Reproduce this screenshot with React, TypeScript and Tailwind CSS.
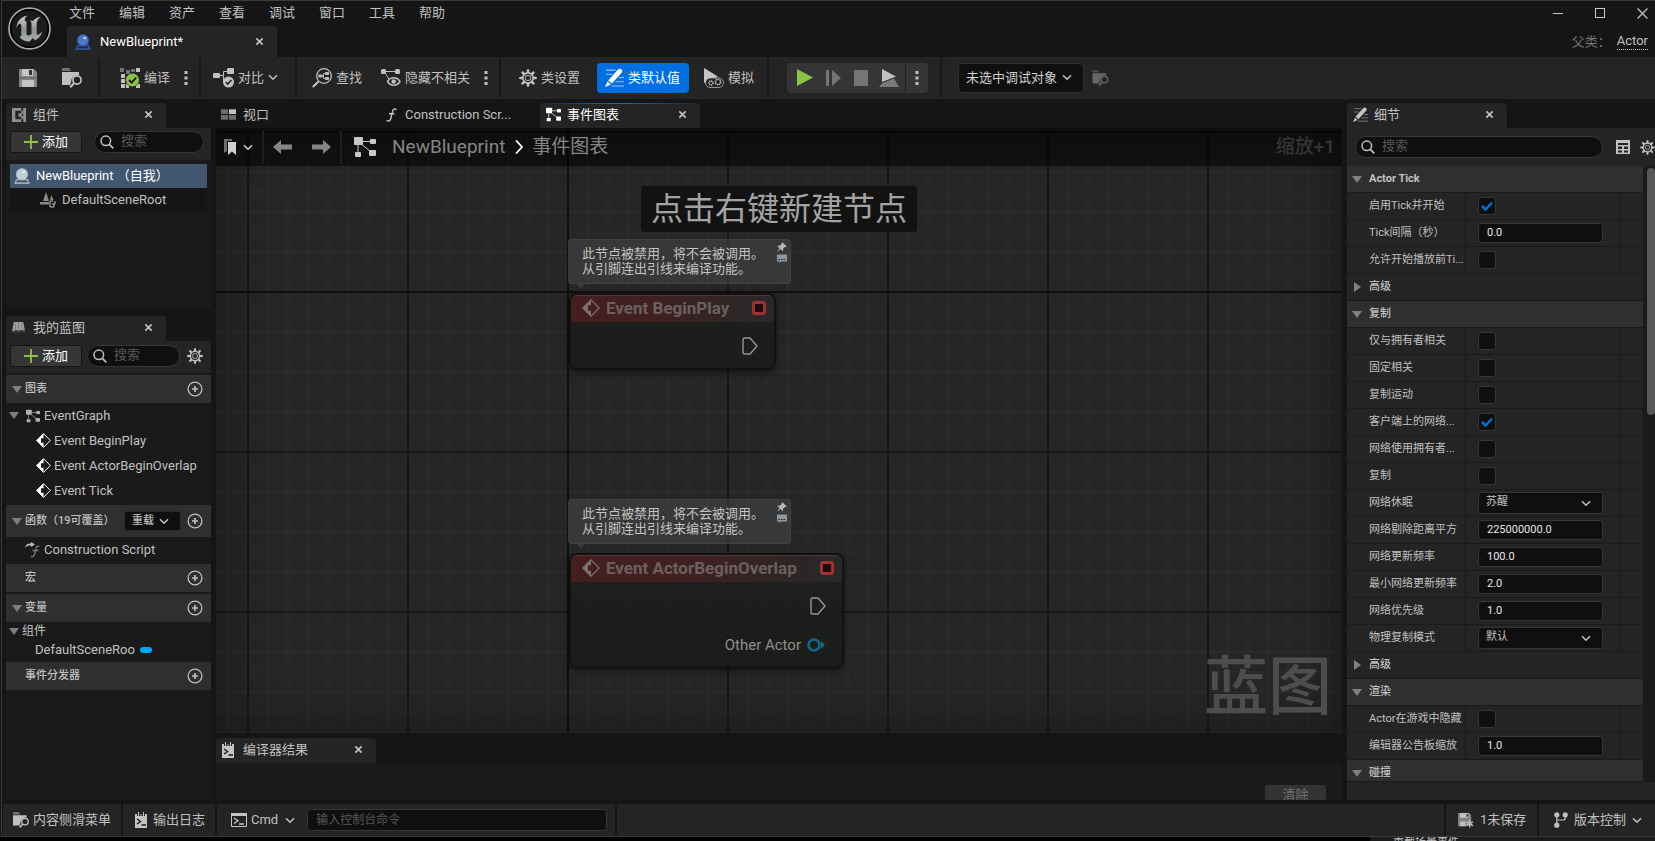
import { useId, type ReactNode } from 'react';

type P = { className?: string };

const Svg = ({ className = '', box = '0 0 20 20', children }: P & { box?: string; children: ReactNode }) => (
  <svg viewBox={box} className={`shrink-0 ${className}`} fill="currentColor" aria-hidden="true">
    {children}
  </svg>
);

const Logo = () => (
  <Svg box="0 0 24 24" className="size-[43px]">
    <defs>
      <linearGradient id="metal" x1="0" y1="0" x2="0" y2="1">
        <stop offset="0" stopColor="#c9cccd" />
        <stop offset="0.55" stopColor="#8d9394" />
        <stop offset="1" stopColor="#aab0b1" />
      </linearGradient>
    </defs>
    <circle cx="12" cy="12" r="11.4" fill="#1b1b1b" stroke="#a9a9a9" strokeWidth="1" />
    <circle cx="12" cy="12" r="10.5" fill="none" stroke="#000" strokeWidth="0.9" />
    <path
      fill="url(#metal)"
      d="M19.13 13.729c-.206.997-1.126 3.557-4.06 4.942l-1.179-1.325-1.988 2a7.338 7.338 0 01-5.804-2.978 2.859 2.859 0 00.65.123c.326.006.678-.114.678-.66v-5.394a.89.89 0 00-1.116-.89c-.92.212-1.656 2.509-1.656 2.509a7.304 7.304 0 012.528-5.597 7.408 7.408 0 013.73-1.721c-1.006.573-1.57 1.507-1.57 2.29 0 1.262.76 1.109.984.923v7.28a1.157 1.157 0 00.148.256 1.075 1.075 0 00.88.445c.76 0 1.747-.868 1.747-.868V9.172c0-.6-.452-1.324-.905-1.572 0 0 .838-.149 1.484.346a5.537 5.537 0 01.387-.425c1.508-1.48 2.929-1.902 4.112-2.112 0 0-2.151 1.69-2.151 3.96 0 1.687.043 5.801.043 5.801.799.771 1.986-.342 3.059-1.441Z"
    />
  </Svg>
);

const Orb = ({ className }: P) => (
  <Svg box="0 0 16 16" className={className}>
    <path d="M2 11h2.5a6 6 0 007 0H14l2 5H0z" opacity=".75" />
    <circle cx="8" cy="6.3" r="6" />
    <circle cx="8" cy="6.3" r="5" fill="#fff" opacity=".12" />
    <circle cx="9.8" cy="4" r="1.3" fill="#fff" opacity=".7" />
    <path d="M3 12.5h10l.8 1.8H2.2z" fill="#111" opacity=".6" />
  </Svg>
);

const Close = ({ className = 'size-[9px]' }: P) => (
  <Svg box="0 0 10 10" className={className}>
    <path d="M1.5 1.5l7 7m0-7l-7 7" fill="none" stroke="currentColor" strokeWidth="1.9" />
  </Svg>
);

const Chevron = ({ className = 'h-[7px] w-[10px]' }: P) => (
  <Svg box="0 0 10 7" className={className}>
    <path d="M1 1.2l4 4 4-4" fill="none" stroke="currentColor" strokeWidth="1.6" />
  </Svg>
);

const Dots = () => (
  <Svg box="0 0 4 16" className="h-[16px] w-[4px] text-[#c0c0c0]">
    <rect x=".5" y="1" width="3" height="3" />
    <rect x=".5" y="6.5" width="3" height="3" />
    <rect x=".5" y="12" width="3" height="3" />
  </Svg>
);

const SaveIcon = ({ className = 'size-[18px]' }: P) => (
  <Svg box="0 0 18 18" className={className}>
    <path d="M0 0h15l3 3v15H0z" fill="#868686" />
    <path d="M3 0h11v7H3z" fill="#c4c4c4" />
    <path d="M10 1h3v5h-3z" fill="#333" />
    <path d="M3 11h12v7H3z" fill="#c4c4c4" />
    <path d="M0 9h18" stroke="#333" strokeWidth="1" opacity=".5" />
  </Svg>
);

const BrowseIcon = ({ className = 'h-[20px] w-[20px]' }: P) => (
  <Svg box="0 0 20 20" className={className}>
    <path d="M0 0h7l2 3H0z" opacity=".5" />
    <path d="M0 4h17v3.2A6.4 6.4 0 009.200 14L8 17H0z" />
    <circle cx="15" cy="12" r="4.1" fill="none" stroke="currentColor" strokeWidth="1.7" />
    <path d="M12.2 15l-4 4.2" stroke="currentColor" strokeWidth="2.2" />
  </Svg>
);

const CompileIcon = () => (
  <Svg box="0 0 20 20" className="size-[20px] text-[#c0c0c0]">
    <path d="M0 0h4v4H0zM6 2h4v4H6zM11 1h4v3h-4z" opacity=".5" />
    <path d="M16 0h4v4h-4zM1 6h4v4H1zM1 11h4v4H1zM1 16h4v4H1zM6 16h3v4H6zM16 16h4v4h-4zM6 9h3v3H6z" />
    <circle cx="12.5" cy="12" r="6.8" fill="#8bc24a" stroke="#242424" strokeWidth=".6" />
    <path d="M9 12l2.600 2.600 4.600-5" fill="none" stroke="#1d1d1d" strokeWidth="2" />
  </Svg>
);

const DiffIcon = () => (
  <Svg box="0 0 21 20" className="h-[20px] w-[21px] text-[#c0c0c0]">
    <rect x="0" y="5" width="7" height="5" rx="1" />
    <rect x="14" y="0" width="7" height="6" rx="1" />
    <path d="M7 7.5h3.500v-4H14m-3.500 4v7" fill="none" stroke="currentColor" strokeWidth="1" />
    <circle cx="15.500" cy="14" r="5.500" />
    <path d="M12.800 14l2 2 3.600-4" fill="none" stroke="#242424" strokeWidth="1.600" />
  </Svg>
);

const FindIcon = () => (
  <Svg box="0 0 20 20" className="size-[20px] text-[#c0c0c0]">
    <circle cx="12" cy="8" r="7.300" fill="none" stroke="currentColor" strokeWidth="1.300" />
    <path d="M6.500 13.500L.8 19" stroke="currentColor" strokeWidth="2.200" />
    <rect x="6.500" y="6.500" width="4" height="3" />
    <rect x="13" y="4" width="4" height="3" rx=".8" />
    <rect x="13" y="9" width="4" height="3" rx=".8" />
    <path d="M10 8h1.500m1.500-2.500h-1.500v5H13" fill="none" stroke="currentColor" strokeWidth=".9" />
  </Svg>
);

const HideIcon = () => (
  <Svg box="0 0 20 20" className="size-[20px] text-[#c0c0c0]">
    <rect x="0" y="1" width="5" height="5" rx="1.500" />
    <rect x="14" y="1" width="5" height="5" rx="1.500" />
    <path d="M5 3.500h9M4 5l4 6" stroke="currentColor" strokeWidth="1" fill="none" />
    <path d="M6.500 13.500c3-5 9.500-5 12.500 0-3 5-9.500 5-12.500 0z" fill="none" stroke="currentColor" strokeWidth="1.500" />
    <circle cx="12.700" cy="13.500" r="2.300" />
  </Svg>
);

const teeth = [0, 45, 90, 135, 180, 225, 270, 315];
const Gear = ({ className = 'size-[16px]' }: P) => (
  <Svg box="0 0 20 20" className={className}>
    {teeth.map((a) => (
      <path key={a} d="M8.300 4.500L8.900.2h2.200l.6 4.300z" transform={`rotate(${a} 10 10)`} />
    ))}
    <circle cx="10" cy="10" r="5.700" fill="none" stroke="currentColor" strokeWidth="1.700" />
    <circle cx="10" cy="10" r="3" fill="none" stroke="currentColor" strokeWidth="1.300" opacity=".75" />
  </Svg>
);

const PencilIcon = ({ className = 'size-[18px]' }: P) => (
  <Svg box="0 0 18 18" className={className}>
    <path d="M1 2h9M1 6h6M13 9h5M10 13h8M6 17h12" stroke="currentColor" strokeWidth="1" opacity=".6" />
    <path d="M12.200 1.500Q14 0 15.600 1.200T16 4.200L6.500 14.800 3 11.800zM2.300 12.800l3.300 2.800L0 18z" />
  </Svg>
);

const SimulateIcon = () => (
  <Svg box="0 0 20 20" className="size-[20px] text-[#c4c4c4]">
    <path d="M0 0l14 8.500L6 12.500 0 15z" />
    <rect x="1.500" y="10" width="18" height="9.500" rx="4.700" fill="#242424" stroke="currentColor" strokeWidth=".7" />
    <circle cx="7" cy="15" r="2" fill="none" stroke="currentColor" strokeWidth="1.300" strokeDasharray="1.200 .5" />
    <circle cx="14" cy="14" r="2.700" fill="none" stroke="currentColor" strokeWidth="1.500" strokeDasharray="1.400 .6" />
  </Svg>
);

const GraphIcon = ({ className = 'size-[14px]' }: P) => (
  <Svg box="0 0 22 20" className={className}>
    <rect x="0" y="0" width="9" height="8" rx="1" />
    <rect x="16" y="2" width="6" height="5" rx="1" />
    <rect x="1" y="15" width="6" height="5" rx="1" />
    <rect x="15" y="13" width="7" height="6" rx="1" />
    <path d="M8 4.500h8M4 8v7M7 7l9 7" stroke="currentColor" strokeWidth="1" fill="none" />
  </Svg>
);

const SearchIcon = () => (
  <Svg box="0 0 14 14" className="size-[14px] text-[#c0c0c0]">
    <circle cx="5.800" cy="5.800" r="4.800" fill="none" stroke="currentColor" strokeWidth="1.500" />
    <path d="M9.300 9.300l4 4" stroke="currentColor" strokeWidth="1.700" />
  </Svg>
);

const Plus = () => (
  <Svg box="0 0 14 14" className="size-[14px] text-[#8bc24a]">
    <path d="M7 0v14M0 7h14" stroke="currentColor" strokeWidth="1.800" />
  </Svg>
);

const CirclePlus = () => (
  <Svg box="0 0 16 16" className="size-[16px] text-[#c0c0c0]">
    <circle cx="8" cy="8" r="6.900" fill="none" stroke="currentColor" strokeWidth="1.300" />
    <path d="M8 5v6M5 8h6" stroke="currentColor" strokeWidth="1.700" />
  </Svg>
);

const Down = () => (
  <Svg box="0 0 10 7" className="h-[7px] w-[10px] text-[#808080]">
    <path d="M0 0h10L5 7z" />
  </Svg>
);

const EventIcon = ({ className = 'size-[15px] text-white' }: P) => (
  <Svg box="0 0 18 18" className={className}>
    <path d="M9 .8L17.200 9 9 17.200.8 9z" fill="none" stroke="currentColor" strokeWidth="1.200" />
    <path d="M9 .5v5.700H6v5.600h3v5.700L.5 9z" />
  </Svg>
);

const LogIcon = () => (
  <Svg box="0 0 12 16" className="h-[16px] w-[12px] text-[#c4c4c4]">
    <path d="M0 2h2v2h1V0h1v4h1.500V2h1v2H8V0h1v4h1V2h2v14H0z" />
    <path d="M2 7l3.500 2.500L2 12M6.500 13H11" fill="none" stroke="#1c1c1c" strokeWidth="1.500" />
  </Svg>
);

const CmdIcon = () => (
  <Svg box="0 0 16 14" className="h-[14px] w-[16px] text-[#c4c4c4]">
    <path d="M.5 1.500h15v12H.5z" fill="none" stroke="currentColor" />
    <path d="M0 0h16v3H0z" />
    <path d="M3 5l4 2.700L3 10.500M8 11h5" fill="none" stroke="currentColor" strokeWidth="1.300" />
  </Svg>
);

const FnIcon = ({ className = 'h-[14px] w-[11px]' }: P) => (
  <Svg box="0 0 11 14" className={className}>
    <path d="M10.500 1.800C9 .3 7.300.8 6.600 3.200L4.800 10.500C4.300 12.800 2.500 13.700.5 12.500M3 5.800h5.500" fill="none" stroke="currentColor" strokeWidth="1.400" />
  </Svg>
);

const Sep = () => <span className="mx-px w-[2px] shrink-0 self-stretch bg-[#171717]" />;

const toolBtn = 'flex h-[30px] shrink-0 items-center gap-1 whitespace-nowrap';

function Tab({ icon, label, active = false }: { icon: ReactNode; label: string; active?: boolean }) {
  return (
    <div
      className={`flex h-[25px] w-[160px] shrink-0 items-center rounded-t-[4px] bg-[#242424] pr-[13px] pb-[2px] pl-[6px] ${active ? 'bg-[linear-gradient(90deg,transparent,#0070e0_50%,transparent)] bg-[length:100%_1px] bg-no-repeat text-white' : ''}`}
    >
      <span className="flex w-[21px] shrink-0">{icon}</span>
      <span className="flex-1 truncate">{label}</span>
      <button aria-label={`关闭${label}`} className="text-[#c0c0c0]">
        <Close />
      </button>
    </div>
  );
}

function Search({ className = '' }: P) {
  return (
    <label className={`flex h-[22px] min-w-0 items-center gap-[7px] rounded-full border border-[#363636] bg-[#0f0f0f] px-[5px] ${className}`}>
      <SearchIcon />
      <input aria-label="搜索" placeholder="搜索" className="w-full min-w-0 bg-transparent pb-[2px] leading-4 outline-none placeholder:text-[#575757]" />
    </label>
  );
}

const AddButton = () => (
  <button className="flex h-[22px] w-[72px] shrink-0 items-center justify-center gap-1 rounded-[3px] border border-[#151515] bg-[#363636] text-white">
    <Plus />
    添加
  </button>
);

const section = 'flex items-center bg-[#2f2f2f] pr-2 pl-[6px] text-[11px] font-medium';

function Section({ title, arrow = true, className = 'h-[28px]', children }: { title: string; arrow?: boolean; className?: string; children?: ReactNode }) {
  return (
    <div className={`${section} ${className}`}>
      <span className="w-[13px]">{arrow && <Down />}</span>
      <span className="flex-1 whitespace-nowrap">{title}</span>
      {children}
      <button aria-label={`添加${title}`}>
        <CirclePlus />
      </button>
    </div>
  );
}

function LeftDock() {
  return (
    <aside className="flex w-[205px] shrink-0 flex-col">
      <section className="flex h-[206px] flex-col">
        <Tab
          label="组件"
          icon={
            <Svg box="0 0 15 15" className="size-[14px] text-[#909090]">
              <path d="M0 0h10v3H3.500v9H10v3H0zM12 0h3v15h-3z" />
              <path d="M12 3h-2v2.500H7v4h3V12h2V8.500h-1.500V6.500H12z" />
            </Svg>
          }
        />
        <div className="flex h-[32px] items-center gap-[12px] bg-[#242424] px-1 pb-1">
          <AddButton />
          <Search className="mr-[3px] flex-1" />
        </div>
        <div className="flex-1 rounded-[3px] bg-[#1a1a1a] p-1">
          <div className="flex h-[24px] items-center gap-[6px] bg-[#40576f] pl-1 text-white">
            <Orb className="size-[16px] text-[#b9c6d3]" />
            NewBlueprint （自我）
          </div>
          <div className="flex h-[24px] items-center gap-[6px] bg-[#151515] pl-[30px]">
            <Svg box="0 0 16 16" className="size-[16px] text-[#8a8a8a]">
              <path d="M6 0l3 9H3zM11.500 3l2 5h-3.500zM0 10h9v2.500H0z" />
              <path d="M13 9h-3v6h4v-3M12 12h3V9" fill="none" stroke="#c0c0c0" />
            </Svg>
            DefaultSceneRoot
          </div>
        </div>
      </section>

      <section className="mt-[7px] flex min-h-0 flex-1 flex-col bg-[#1a1a1a]">
        <div className="bg-[#151515]">
          <Tab
            label="我的蓝图"
            icon={
              <Svg box="0 0 15 15" className="size-[14px] text-[#a0a0a0]">
                <path d="M2 1h4.500l.5 1 .5-1H12l2 9.500-5.500-.5L7 11l-1.500-1L0 11z" />
                <path d="M0 11l5.500-1L7 11.500 8.500 10l5.500.5v2L8 12l-1 1.500L5.500 12 0 13z" fill="#3b3b3b" />
                <path d="M4 1.500l-.7 8M7 2v8M10 1.500l.7 8" stroke="#666" strokeWidth=".6" />
              </Svg>
            }
          />
        </div>
        <div className="mb-[2px] flex h-[32px] shrink-0 items-center gap-[5px] bg-[#242424] px-1 pb-[2px]">
          <AddButton />
          <Search className="flex-1" />
          <button aria-label="设置" className="mr-1 ml-[2px] text-[#c0c0c0]">
            <Gear />
          </button>
        </div>
        <Section title="图表" />
        <div className="mb-[2px]">
          <div className="flex h-[25px] items-center pl-[3px]">
            <Down />
            <GraphIcon className="mr-1 ml-[7px] size-[14px] text-[#b0b0b0]" />
            EventGraph
          </div>
          {['Event BeginPlay', 'Event ActorBeginOverlap', 'Event Tick'].map((e) => (
            <div key={e} className="flex h-[25px] items-center gap-[3px] pl-[30px] whitespace-nowrap">
              <EventIcon />
              {e}
            </div>
          ))}
        </div>
        <Section title="函数（19可覆盖）" className="h-[32px]">
          <span className="mr-[6px] grid w-[57px] items-center">
            <select aria-label="重载函数" className="col-start-1 row-start-1 h-[20px] appearance-none rounded-[3px] border border-[#2a2a2a] bg-[#0f0f0f] pl-[7px]">
              <option>重载</option>
            </select>
            <Chevron className="pointer-events-none col-start-1 row-start-1 mr-3 h-[7px] w-[10px] justify-self-end" />
          </span>
        </Section>
        <div className="flex h-[27px] items-center gap-1 pb-[2px] pl-[19px]">
          <Svg box="0 0 15 16" className="h-[16px] w-[15px] text-[#c0c0c0]">
            <path d="M0 6c1-4 3-4.500 6-4.500V0l4 2.500L6 5V3.500C4 3.500 2 3.500 0 6z" />
            <path d="M14.500 4.500c-2-1-3 0-3.500 2l-1.500 6c-.5 2-1.500 2.500-3.500 2M7.500 8.500h6" fill="none" stroke="#777" strokeWidth="1.300" />
          </Svg>
          Construction Script
        </div>
        <Section title="宏" arrow={false} />
        <div className="h-[2px]" />
        <Section title="变量" />
        <div className="flex h-[18px] items-center gap-[3px] pl-[3px] text-xs">
          <Down />
          组件
        </div>
        <div className="flex h-[22px] items-center gap-[5px] pb-[2px] pl-[29px]">
          DefaultSceneRoo
          <span className="h-[6px] w-[12px] rounded-full bg-[#00a8f6]" />
        </div>
        <Section title="事件分发器" arrow={false} />
      </section>
    </aside>
  );
}

function Comment({ className }: { className: string }) {
  return (
    <div className={`absolute flex h-[45px] w-[223px] justify-between rounded-[4px] border border-white/5 bg-[#454545]/60 py-[6px] pr-[2px] pl-[13px] leading-[15px] text-[#c4c4c4] ${className}`}>
      <p className="whitespace-nowrap">
        此节点被禁用，将不会被调用。
        <br />
        从引脚连出引线来编译功能。
      </p>
      <Svg box="0 0 12 22" className="-mt-1 h-[22px] w-[12px] text-[#b5b5b5]">
        <path d="M6 0l5 4.500-2 .5-1.800 1.500L7 9.500 4.500 7 1 10l2.500-4L1 4l3-.5L5.500 2z" />
        <path d="M1 12.500h10v7H5l-1.500 1.500v-1.500H1z" fill="#8d979f" />
        <path d="M2.500 17.500h1.500m1 0h1.500m1 0h1.500" stroke="#1d1d1d" strokeWidth="1.200" />
      </Svg>
      <Svg box="0 0 8 5" className="absolute top-[44px] left-[8px] h-[5px] w-[8px] text-[#3a3a3a]">
        <path d="M0 0h8L4 5z" />
      </Svg>
    </div>
  );
}

function EventNode({ title, className, children }: { title: string; className: string; children?: ReactNode }) {
  return (
    <article className={`absolute flex flex-col overflow-hidden rounded-[8px] border-2 border-[#121212] bg-[linear-gradient(#1f1f1fcc,#181b17cc_60%,#181b17cc)] shadow-[0_3px_6px_rgba(0,0,0,.5)] ${className}`}>
      <header className="flex h-[27px] shrink-0 items-center border-t border-[#6a4040]/60 bg-[linear-gradient(90deg,#451e1e_0%,#402020_40%,#2b2626_85%,#292929_100%)] pr-[8px] pb-[3px] pl-[11px] text-[17px] leading-5 font-bold text-[#6b6060]">
        <EventIcon className="mr-[6px] size-[18px] text-[#7d7170]" />
        <span className="flex-1 whitespace-nowrap">{title}</span>
        <span className="size-[14px] rounded-[3px] border-[3px] border-[#a03030] bg-[#1b0d0d]" />
      </header>
      <div className="mt-[15px] flex justify-end pr-[16px]">
        <Svg box="0 0 16 18" className="h-[18px] w-[16px] text-[#969696]">
          <path d="M1 2.500Q1 1 2.500 1H8l7 8-7 8H2.500Q1 17 1 15.500z" fill="none" stroke="currentColor" strokeWidth="1.400" />
        </Svg>
      </div>
      {children}
    </article>
  );
}

function Graph() {
  return (
    <div className="relative min-h-0 flex-1 overflow-hidden bg-[#262626] bg-[linear-gradient(#0e0e0e,#0e0e0e),linear-gradient(#0e0e0e,#0e0e0e),linear-gradient(#171717_2px,transparent_2px),linear-gradient(90deg,#171717_2px,transparent_2px),linear-gradient(#2b2b2b_2px,transparent_2px),linear-gradient(90deg,#2b2b2b_2px,transparent_2px)] bg-[length:2px_100%,100%_2px,160px_160px,160px_160px,20px_20px,20px_20px] [background-position:351px_0,0_163px,0_3px,31px_0,0_3px,11px_0] [background-repeat:no-repeat,no-repeat,repeat,repeat,repeat,repeat]">
      <div className="absolute inset-0 shadow-[inset_0_0_60px_rgba(0,0,0,.4)]" />
      <p className="absolute right-[10px] bottom-[10px] text-[64px] leading-[70px] font-medium text-[#4d4d4d]">蓝图</p>

      <Comment className="top-[111px] left-[352px]" />
      <EventNode title="Event BeginPlay" className="top-[165px] left-[353px] h-[77px] w-[207px]" />
      <Comment className="top-[371px] left-[352px]" />
      <EventNode title="Event ActorBeginOverlap" className="top-[425px] left-[353px] h-[115px] w-[275px]">
        <div className="mt-5 flex items-center justify-end gap-[6px] pr-[17px] text-[15px] leading-5 text-[#909090]">
          Other Actor
          <Svg box="0 0 18 14" className="h-[14px] w-[18px] text-[#14678c]">
            <circle cx="7" cy="7" r="5.500" fill="none" stroke="currentColor" strokeWidth="2.700" />
            <path d="M14 3l4 4-4 4z" />
          </Svg>
        </div>
      </EventNode>

      <div className="relative flex h-[38px] items-center bg-black/55 pr-[7px] pl-2 text-[19px] text-[#858585]">
        <button aria-label="书签" className="flex items-center gap-[7px] text-[#d0d0d0]">
          <Svg box="0 0 12 16" className="h-[16px] w-[12px]">
            <path d="M0 0h8v2H3v10l-3 2z" opacity=".5" />
            <path d="M4 3h8v13l-4-3.500L4 16z" />
          </Svg>
          <Chevron />
        </button>
        <span className="mx-[9px] h-[34px] w-[2px] bg-[#1e1e1e]" />
        <button aria-label="后退" className="mr-5">
          <Svg box="0 0 19 14" className="h-[14px] w-[19px] text-[#858585]">
            <path d="M0 7l8-7v4.500h11v5H8V14z" />
          </Svg>
        </button>
        <button aria-label="前进">
          <Svg box="0 0 19 14" className="h-[14px] w-[19px] text-[#858585]">
            <path d="M19 7l-8-7v4.500H0v5h11V14z" />
          </Svg>
        </button>
        <span className="mr-3 ml-[9px] h-[34px] w-[2px] bg-[#1e1e1e]" />
        <GraphIcon className="mr-4 h-[20px] w-[22px] text-[#c8c8c8]" />
        <span>NewBlueprint</span>
        <Svg box="0 0 8 14" className="mr-[9px] ml-[10px] h-[14px] w-[8px] text-white">
          <path d="M1 .5L7 7l-6 6.500" fill="none" stroke="currentColor" strokeWidth="1.800" />
        </Svg>
        <span>事件图表</span>
        <span className="ml-auto font-medium text-[#353535]">缩放+1</span>
      </div>
      <p className="relative mx-auto mt-5 flex h-[46px] w-fit items-center rounded-[3px] bg-[#111]/90 px-[10px] text-[32px] leading-[46px] whitespace-nowrap text-[#a3a3a3]">点击右键新建节点</p>
    </div>
  );
}

function Center() {
  return (
    <main className="flex min-w-0 flex-1 flex-col">
      <nav className="flex h-[25px] shrink-0 items-center">
        <button className="flex w-[162px] shrink-0 items-center gap-[7px] pb-[2px] pl-[5px] text-left">
          <Svg box="0 0 16 11" className="h-[11px] w-[15px] text-[#c4c4c4]">
            <path d="M8.500 0H16v5H8.500z" />
            <path d="M0 0h7.500v5H0zM0 6h7.500v5H0zM8.500 6H16v5H8.500z" opacity=".5" />
          </Svg>
          视口
        </button>
        <button className="flex w-[162px] shrink-0 items-center gap-2 pb-[2px] pl-2 text-left whitespace-nowrap">
          <FnIcon />
          Construction Scr...
        </button>
        <Tab label="事件图表" active icon={<GraphIcon className="size-[15px] text-white" />} />
      </nav>
      <Graph />
      <section className="mt-[5px] shrink-0">
        <Tab label="编译器结果" icon={<LogIcon />} />
        <div className="flex h-[37px] items-start justify-end overflow-hidden bg-[#1a1a1a] pt-[22px] pr-[16px]">
          <button className="h-[22px] w-[61px] rounded-[3px] bg-[#333] pb-[2px] leading-4 text-[#707070]">清除</button>
        </div>
      </section>
    </main>
  );
}

type Row = { k: 'head' | 'adv' | 'check' | 'num' | 'sel'; label: string; v?: string; on?: boolean };

const rows: Row[] = [
  { k: 'head', label: 'Actor Tick' },
  { k: 'check', label: '启用Tick并开始', on: true },
  { k: 'num', label: 'Tick间隔（秒）', v: '0.0' },
  { k: 'check', label: '允许开始播放前Ti...' },
  { k: 'adv', label: '高级' },
  { k: 'head', label: '复制' },
  { k: 'check', label: '仅与拥有者相关' },
  { k: 'check', label: '固定相关' },
  { k: 'check', label: '复制运动' },
  { k: 'check', label: '客户端上的网络...', on: true },
  { k: 'check', label: '网络使用拥有者...' },
  { k: 'check', label: '复制' },
  { k: 'sel', label: '网络休眠', v: '苏醒' },
  { k: 'num', label: '网络剔除距离平方', v: '225000000.0' },
  { k: 'num', label: '网络更新频率', v: '100.0' },
  { k: 'num', label: '最小网络更新频率', v: '2.0' },
  { k: 'num', label: '网络优先级', v: '1.0' },
  { k: 'sel', label: '物理复制模式', v: '默认' },
  { k: 'adv', label: '高级' },
  { k: 'head', label: '渲染' },
  { k: 'check', label: 'Actor在游戏中隐藏' },
  { k: 'num', label: '编辑器公告板缩放', v: '1.0' },
  { k: 'head', label: '碰撞' },
];

const fieldBox = 'rounded-[3px] border border-[#363636] bg-[#0f0f0f]';

function Property({ row }: { row: Row }) {
  const id = useId();
  if (row.k === 'head' || row.k === 'adv') {
    const head = row.k === 'head';
    const latin = /^[A-Z]/.test(row.label);
    return (
      <button className={`flex h-[27px] w-full shrink-0 items-center border-b border-[#1a1a1a] pl-[5px] text-left ${head ? 'bg-[#2f2f2f]' : 'bg-[#242424]'} ${latin ? 'font-bold' : 'font-medium'}`}>
        <span className="w-[17px]">
          {head ? (
            <Down />
          ) : (
            <Svg box="0 0 7 10" className="ml-[2px] h-[10px] w-[7px] text-[#808080]">
              <path d="M0 0v10l7-5z" />
            </Svg>
          )}
        </span>
        {row.label}
      </button>
    );
  }
  return (
    <div className="flex h-[27px] shrink-0 items-center border-b border-[#1a1a1a] bg-[#242424]">
      <label htmlFor={id} className="w-[119px] shrink-0 overflow-hidden border-r border-[#1a1a1a] pl-[22px] leading-[26px] whitespace-nowrap">
        {row.label}
      </label>
      <div className="flex flex-1 items-center border-r border-[#1a1a1a] pr-[17px] pl-3 leading-[26px]">
        <span className="grid h-[26px] flex-1 items-center">
          {row.k === 'check' && (
            <>
              <input id={id} type="checkbox" defaultChecked={row.on} className={`peer col-start-1 row-start-1 size-[18px] appearance-none ${fieldBox}`} />
              <Svg box="0 0 12 10" className="pointer-events-none invisible col-start-1 row-start-1 ml-[3px] h-[10px] w-[12px] text-[#0070e0] peer-checked:visible">
                <path d="M1 5l3.500 3.500L11 1.500" fill="none" stroke="currentColor" strokeWidth="2.500" />
              </Svg>
            </>
          )}
          {row.k === 'num' && <input id={id} defaultValue={row.v} className={`h-[20px] w-full min-w-0 pl-[8px] text-[#e8e8e8] ${fieldBox}`} />}
          {row.k === 'sel' && (
            <>
              <select id={id} className={`col-start-1 row-start-1 h-[22px] w-full appearance-none pb-[2px] pl-[7px] leading-4 ${fieldBox}`}>
                <option>{row.v}</option>
              </select>
              <Chevron className="pointer-events-none col-start-1 row-start-1 mr-3 h-[7px] w-[10px] justify-self-end" />
            </>
          )}
        </span>
      </div>
      <span className="w-[22px] shrink-0" />
    </div>
  );
}

function Details() {
  return (
    <aside className="flex w-[308px] shrink-0 flex-col">
      <Tab label="细节" icon={<PencilIcon className="size-[15px] text-[#c4c4c4]" />} />
      <div className="flex h-[38px] shrink-0 items-center bg-[#242424] pl-2 text-[#c0c0c0]">
        <Search className="mr-[13px] flex-1" />
        <button aria-label="属性矩阵" className="mr-[10px]">
          <Svg box="0 0 14 14" className="size-[14px]">
            <path d="M0 0h14v14H0zM2 3v2h10V3zM2 6.500V9h4V6.500zM8 6.500V9h4V6.500zM2 10.500v2h4v-2zM8 10.500v2h4v-2z" fillRule="evenodd" />
          </Svg>
        </button>
        <button aria-label="视图选项">
          <Gear className="size-[15px]" />
        </button>
      </div>
      <div className="flex min-h-0 flex-1 overflow-hidden text-[11px]">
        <div className="flex min-w-0 flex-1 flex-col">
          {rows.map((r, i) => (
            <Property key={i} row={r} />
          ))}
        </div>
        <div className="w-[12px] shrink-0 bg-[#1a1a1a] pt-[2px] pl-1">
          <div className="h-[247px] w-[8px] rounded-full bg-[#575757]" />
        </div>
      </div>
      <div className="h-[19px] shrink-0 border-t border-[#1a1a1a] bg-[#242424]" />
    </aside>
  );
}

function Toolbar() {
  return (
    <div className="flex h-[42px] shrink-0 items-center bg-[#242424] pt-px pb-[2px] text-[#c0c0c0]">
      <button aria-label="保存" className="mr-[25px] ml-[17px]">
        <SaveIcon />
      </button>
      <button aria-label="浏览" className="mr-[15px]">
        <BrowseIcon />
      </button>
      <Sep />
      <button className={`${toolBtn} mr-[14px] ml-[19px]`}>
        <CompileIcon />
        编译
      </button>
      <button aria-label="编译选项" className="mr-[10px]">
        <Dots />
      </button>
      <Sep />
      <button className={`${toolBtn} mr-[16px] ml-[11px]`}>
        <DiffIcon />
        对比
        <Chevron />
      </button>
      <Sep />
      <button className={`${toolBtn} mr-[19px] ml-[14px]`}>
        <FindIcon />
        查找
      </button>
      <button className={`${toolBtn} mr-[14px]`}>
        <HideIcon />
        隐藏不相关
      </button>
      <button aria-label="隐藏选项" className="mr-[10px]">
        <Dots />
      </button>
      <Sep />
      <button className={`${toolBtn} ml-[17px]`}>
        <Gear className="size-[18px]" />
        类设置
      </button>
      <button className={`${toolBtn} mr-[15px] ml-[17px] w-[92px] rounded-[4px] bg-[#0070e0] pl-2 text-white`}>
        <PencilIcon className="size-[19px]" />
        类默认值
      </button>
      <button className={`${toolBtn} mr-3`}>
        <SimulateIcon />
        模拟
      </button>
      <Sep />
      <div className="mr-[11px] ml-[17px] flex h-[30px] w-[141px] items-center rounded-[4px] bg-[#353535]">
        <button aria-label="播放" className="ml-[10px] w-[29px]">
          <Svg box="0 0 16 17" className="h-[17px] w-[16px] text-[#8bc24a]">
            <path d="M0 0l16 8.500L0 17z" />
          </Svg>
        </button>
        <button aria-label="单步" className="w-[28px]">
          <Svg box="0 0 15 16" className="h-[16px] w-[15px] text-[#757575]">
            <path d="M0 0h3v16H0zM6 0l9 8-9 8z" />
          </Svg>
        </button>
        <button aria-label="停止" className="w-[25px]">
          <span className="block h-[16px] w-[14px] bg-[#757575]" />
        </button>
        <button aria-label="弹出" className="w-[26px]">
          <Svg box="0 0 20 18" className="h-[18px] w-[20px]">
            <path d="M3 0l14 7.500L3 13z" />
            <path d="M0 18l3.500-4L15 9.500 20 18z" opacity=".5" />
          </Svg>
        </button>
        <span className="h-full w-px bg-[#202020]" />
        <button aria-label="播放选项" className="flex flex-1 justify-center">
          <Dots />
        </button>
      </div>
      <Sep />
      <span className="mr-2 ml-[15px] grid w-[126px] items-center">
        <select aria-label="调试对象" className="col-start-1 row-start-1 h-[30px] appearance-none rounded-[4px] border border-[#2f2f2f] bg-[#0f0f0f] pl-[7px] text-[#d0d0d0]">
          <option>未选中调试对象</option>
        </select>
        <Chevron className="pointer-events-none col-start-1 row-start-1 mr-3 h-[7px] w-[10px] justify-self-end" />
      </span>
      <button aria-label="定位调试对象" className="text-[#676767]">
        <BrowseIcon className="h-[16px] w-[17px]" />
      </button>
    </div>
  );
}

function TitleBar() {
  return (
    <header className="flex h-[57px] shrink-0 justify-between border-t border-[#3a3a3a]">
      <div className="flex">
        <div className="w-[65px] pt-[6px] pl-[6px]">
          <Logo />
        </div>
        <div>
          <nav className="flex h-[25px] items-center gap-6 pb-[2px] pl-[2px]">
            {['文件', '编辑', '资产', '查看', '调试', '窗口', '工具', '帮助'].map((m) => (
              <button key={m}>{m}</button>
            ))}
          </nav>
          <div className="flex h-[31px] w-[210px] items-center rounded-t-[4px] bg-[#242424] pr-[13px] pl-2 text-white">
            <Orb className="mr-[9px] size-[16px] text-[#3564c0]" />
            <span className="flex-1">NewBlueprint*</span>
            <button aria-label="关闭 NewBlueprint" className="text-[#c0c0c0]">
              <Close />
            </button>
          </div>
        </div>
      </div>
      <div className="flex flex-col items-end pr-[7px]">
        <div className="flex h-[25px] items-center gap-8 pb-px">
          <button aria-label="最小化" className="h-px w-[10px] bg-[#c8c8c8]" />
          <button aria-label="最大化" className="size-[10px] border border-[#c8c8c8]" />
          <button aria-label="关闭">
            <Svg box="0 0 10 10" className="size-[11px]">
              <path d="M.5.5l9 9m0-9l-9 9" stroke="currentColor" strokeWidth="1.200" />
            </Svg>
          </button>
        </div>
        <div className="flex h-[31px] items-center gap-[6px]">
          <span className="text-[#757575]">父类：</span>
          <a href="#actor" className="border-b border-dotted border-[#d0d0d0] leading-4">
            Actor
          </a>
        </div>
      </div>
    </header>
  );
}

const cell = 'flex shrink-0 items-center bg-[#242424]';

function StatusBar() {
  return (
    <footer className="mt-1 flex h-[32px] shrink-0 gap-[2px] pl-px">
      <button className={`${cell} w-[118px] gap-[4px] pl-[10px]`}>
        <BrowseIcon className="size-[16px]" />
        内容侧滑菜单
      </button>
      <button className={`${cell} w-[92px] gap-[6px] pl-[12px]`}>
        <LogIcon />
        输出日志
      </button>
      <div className={`${cell} w-[398px] pr-2 pl-[14px]`}>
        <button className="mr-3 flex items-center gap-1">
          <CmdIcon />
          Cmd
          <Chevron className="ml-[3px] h-[7px] w-[10px]" />
        </button>
        <input aria-label="输入控制台命令" placeholder="输入控制台命令" className={`h-[22px] min-w-0 flex-1 pl-2 text-xs placeholder:text-[#575757] ${fieldBox}`} />
      </div>
      <div className="flex-1 bg-[#242424]" />
      <button className={`${cell} w-[91px] gap-[6px] pl-3`}>
        <Svg box="0 0 17 16" className="h-[15px] w-[16px]">
          <path d="M0 0h12l2 2v7L9 14H0z" opacity=".6" />
          <path d="M2 0h9v5H2zM2 9h6v5H2z" />
          <path d="M9 1h1.500v3H9z" fill="#242424" />
          <path d="M12.500 7.500v8M9 9.500l7 4M16 9.500l-7 4" stroke="currentColor" strokeWidth="1.600" />
        </Svg>
        1未保存
      </button>
      <button className={`${cell} w-[116px] gap-[6px] pl-[15px]`}>
        <Svg box="0 0 14 16" className="h-[16px] w-[14px]">
          <circle cx="2.800" cy="2.800" r="2.600" />
          <circle cx="11.200" cy="2.800" r="2.600" />
          <circle cx="2.800" cy="13.200" r="2.600" />
          <path d="M2.800 3v10M11.200 3v3q0 2-2 2H3" fill="none" stroke="currentColor" strokeWidth="1.200" />
        </Svg>
        版本控制
        <Chevron />
      </button>
    </footer>
  );
}

export default function App() {
  return (
    <div className="flex h-screen min-w-[1400px] flex-col overflow-hidden bg-[#151515] font-[Roboto,'Noto_Sans_CJK_SC',sans-serif] text-[13px] leading-[18px] text-[#c0c0c0]">
      <div className="ml-px flex min-h-0 flex-1 flex-col border-b border-l border-[#3a3a3a]">
        <TitleBar />
        <Toolbar />
        <div className="flex min-h-0 flex-1 gap-[5px] pt-1 pl-1">
          <LeftDock />
          <Center />
          <Details />
        </div>
        <StatusBar />
      </div>
      <div className="flex h-[4px] shrink-0 justify-end overflow-hidden bg-black">
        <div className="w-[285px] bg-[#1c1c1c] pl-[23px] text-[11px] leading-3">重载场景事件</div>
      </div>
    </div>
  );
}
